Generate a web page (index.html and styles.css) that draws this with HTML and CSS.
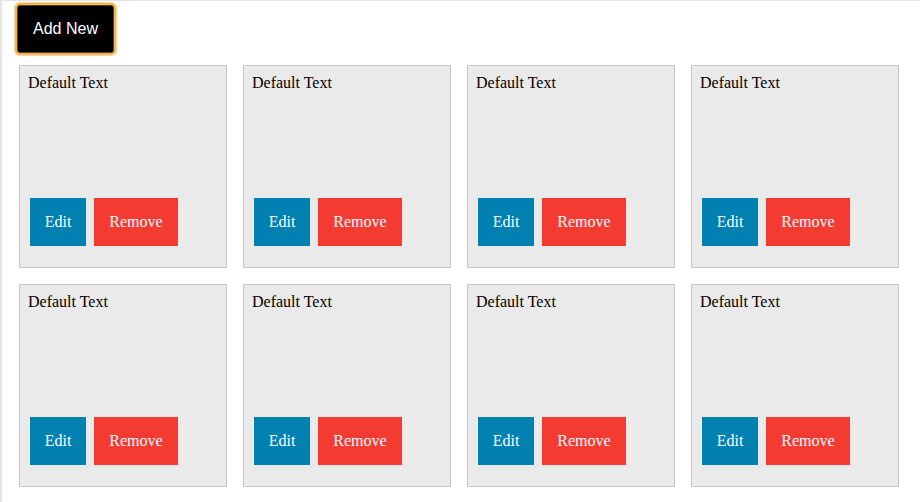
FILE: index.html
```html
<!DOCTYPE html>
<html>
<head>
<meta charset="utf-8">
<link rel="stylesheet" href="styles.css">
</head>
<body>
<div class="page">
  <button class="add-btn">Add New</button>
  <div class="grid">
    <div class="card"><div class="card-text">Default Text</div><div class="actions"><button class="btn edit">Edit</button><button class="btn remove">Remove</button></div></div>
    <div class="card"><div class="card-text">Default Text</div><div class="actions"><button class="btn edit">Edit</button><button class="btn remove">Remove</button></div></div>
    <div class="card"><div class="card-text">Default Text</div><div class="actions"><button class="btn edit">Edit</button><button class="btn remove">Remove</button></div></div>
    <div class="card"><div class="card-text">Default Text</div><div class="actions"><button class="btn edit">Edit</button><button class="btn remove">Remove</button></div></div>
    <div class="card"><div class="card-text">Default Text</div><div class="actions"><button class="btn edit">Edit</button><button class="btn remove">Remove</button></div></div>
    <div class="card"><div class="card-text">Default Text</div><div class="actions"><button class="btn edit">Edit</button><button class="btn remove">Remove</button></div></div>
    <div class="card"><div class="card-text">Default Text</div><div class="actions"><button class="btn edit">Edit</button><button class="btn remove">Remove</button></div></div>
    <div class="card"><div class="card-text">Default Text</div><div class="actions"><button class="btn edit">Edit</button><button class="btn remove">Remove</button></div></div>
  </div>
</div>
</body>
</html>
```
FILE: styles.css
```css
html, body {
  margin: 0;
  padding: 0;
  background: #ffffff;
}
body {
  font-family: "Liberation Serif", "Times New Roman", serif;
  font-size: 16px;
  color: #000;
}
.page {
  box-sizing: border-box;
  height: 502px;
  border-top: 1px solid #e4e4e4;
  border-left: 2px solid #e4e4e4;
  display: flex;
  flex-direction: column;
  align-items: flex-start;
}
.add-btn {
  box-sizing: border-box;
  margin: 4px 0 0 15px;
  width: 97px;
  height: 48px;
  background: #000;
  color: #fff;
  border: 1px solid #5a4320;
  border-radius: 3px;
  box-shadow: 0 0 0 2px #f2b55a, 0 0 1px 3px #f6d39a;
  font-family: "Liberation Sans", Arial, sans-serif;
  font-size: 16px;
  padding: 0;
}
.grid {
  margin: 12px 0 0 17px;
  display: grid;
  grid-template-columns: repeat(4, 208px);
  grid-auto-rows: 203px;
  column-gap: 16px;
  row-gap: 16px;
}
.card {
  box-sizing: border-box;
  border: 1px solid #c7c7c7;
  background: #eaeaea;
  padding: 8px;
  display: flex;
  flex-direction: column;
}
.card-text {
  line-height: 18px;
}
.actions {
  margin-top: auto;
  margin-bottom: 13px;
  padding-left: 2px;
  display: flex;
  gap: 8px;
}
.btn {
  height: 48px;
  border: none;
  padding: 0;
  color: #fff;
  font-family: "Liberation Serif", "Times New Roman", serif;
  font-size: 16px;
}
.edit {
  width: 56px;
  background: #0280b1;
}
.remove {
  width: 84px;
  background: #f43b32;
}
```
